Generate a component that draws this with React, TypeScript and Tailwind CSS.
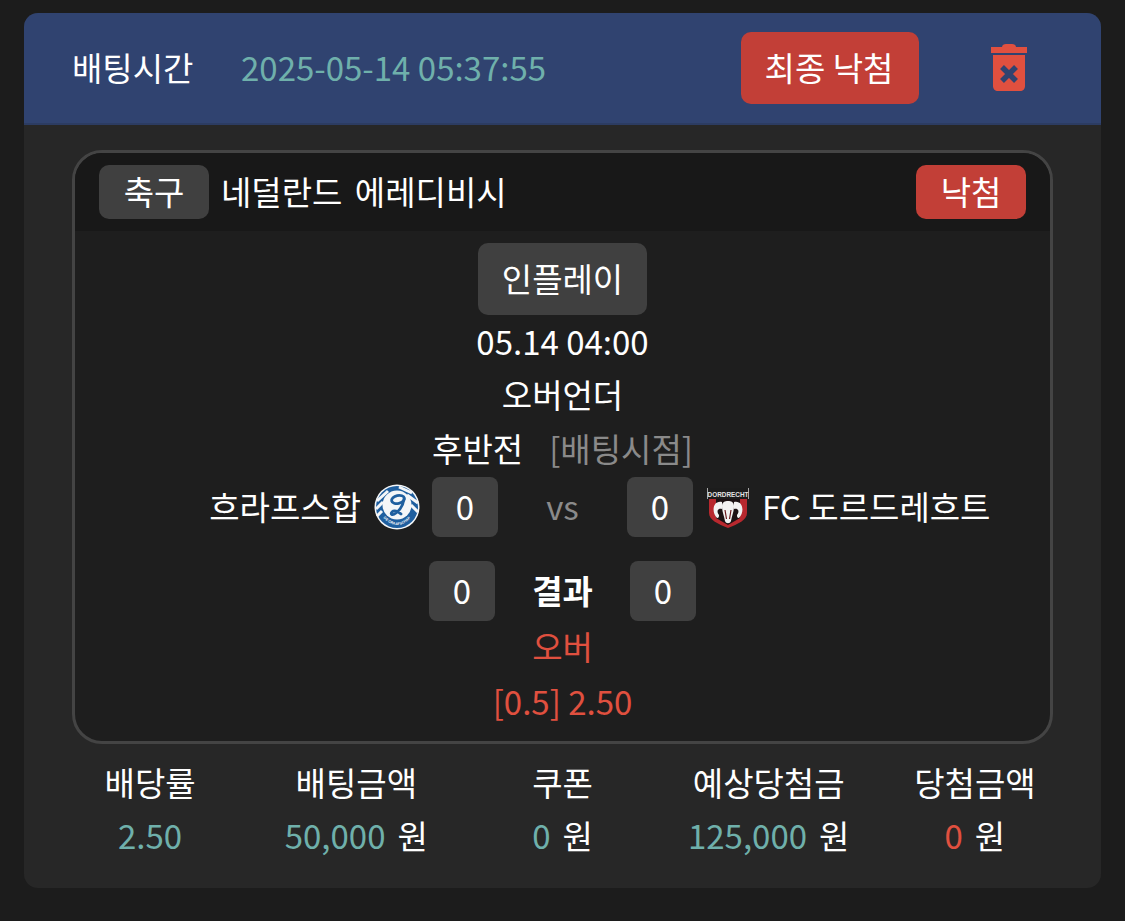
function GraafschapLogo() {
  return (
    <svg width="46" height="46" viewBox="0 0 46 46" className="shrink-0">
      <circle cx="23" cy="23" r="22.5" fill="#f4f6f8" />
      <circle cx="23" cy="23" r="21" fill="#1f5f9f" />
      <path d="M3 17 L14 7 M2 25 L9 18 M3 32 L8 27 M25 3 L38 9 M33 11 L44 19 M37 21 L44 28" stroke="#f4f6f8" strokeWidth="3" fill="none" />
      <circle cx="23" cy="21" r="14.5" fill="#f4f6f8" />
      <ellipse cx="24" cy="15.5" rx="6.5" ry="4" fill="none" stroke="#1f5f9f" strokeWidth="2.8" transform="rotate(-12 24 15.5)" />
      <path d="M30 15 C29 22 26 26 22 29 C18 32 16 30 18 28 C20 26 24 27 27 30" stroke="#1f5f9f" strokeWidth="2.8" fill="none" strokeLinecap="round" />
      <path id="graafArc" d="M6 30 Q23 52 40 30" fill="none" />
      <text fontSize="3.6" fontWeight="700" fill="#f4f6f8" fontFamily="'Liberation Sans',sans-serif">
        <textPath href="#graafArc" startOffset="12%">DE GRAAFSCHAP</textPath>
      </text>
    </svg>
  );
}

function DordrechtLogo() {
  return (
    <svg width="44" height="44" viewBox="0 0 44 44" className="shrink-0">
      <path d="M3 12 H41 V28 C41 35 32 39 22 43 C12 39 3 35 3 28 Z" fill="#b8282e" />
      <path d="M10 12 H34 V33 L22 40 L10 33 Z" fill="#1c1214" />
      <path d="M1.5 3 V14 M42.5 3 V14" stroke="#c9c9c9" strokeWidth="0.8" />
      <rect x="2" y="3" width="40" height="11" fill="#1c1c1c" />
      <text x="22" y="11.5" textAnchor="middle" fontSize="6.4" fontWeight="700" fill="#e4e4e4" fontFamily="'Liberation Sans',sans-serif">DORDRECHT</text>
      <path d="M16 21 C16 17 19 16 22 16 C25 16 28 17 28 21 C28 27 26 30 25 36 C24 39 20 39 19 36 C18 30 16 27 16 21 Z" fill="#f2f2f2" />
      <path d="M16 17 C7 15 5 27 11 33 C13 33 13 31 13 30 C10 26 12 23 16 24 Z M28 17 C37 15 39 27 33 33 C31 33 31 31 31 30 C34 26 32 23 28 24 Z" fill="#f2f2f2" />
      <path d="M19 25 L20.5 34 M25 25 L23.5 34" stroke="#6a1a1e" strokeWidth="1.2" />
    </svg>
  );
}

function TrashIcon() {
  return (
    <svg width="36" height="47" viewBox="0 0 36 47">
      <path d="M11 3 C11 1 13 0 15 0 H21 C23 0 25 1 25 3 H36 V9 H0 V3 Z" fill="#e0503f" />
      <path d="M2 11 H34 V42 C34 45 32 47 29 47 H7 C4 47 2 45 2 42 Z" fill="#e0503f" />
      <path d="M11 23 L25 37 M25 23 L11 37" stroke="#304370" strokeWidth="5.5" />
    </svg>
  );
}

function ScoreBox({ value }: { value: number }) {
  return (
    <div className="flex h-[60px] w-[66px] shrink-0 items-center justify-center rounded-lg bg-[#404040] pb-[2px] text-[33px] text-white">
      {value}
    </div>
  );
}

const summary = [
  { label: '배당률', value: '2.50', unit: '', tone: 'text-[#6fb0ab]' },
  { label: '배팅금액', value: '50,000', unit: '원', tone: 'text-[#6fb0ab]' },
  { label: '쿠폰', value: '0', unit: '원', tone: 'text-[#6fb0ab]' },
  { label: '예상당첨금', value: '125,000', unit: '원', tone: 'text-[#6fb0ab]' },
  { label: '당첨금액', value: '0', unit: '원', tone: 'text-[#e0503f]' },
];

export default function App() {
  return (
    <div className="h-[921px] bg-[#1c1c1c] px-[24px] pt-[13px] font-['Noto_Sans_CJK_KR','Noto_Sans',sans-serif] text-[33px] font-normal leading-[40px] text-white">
      <div className="h-[875px] overflow-hidden rounded-[14px] bg-[#272727]">
        {/* header */}
        <div className="flex h-[112px] items-center border-b-2 border-[#2c3c62] bg-[#304370] pl-[48px]">
          <span className="w-[169px] pb-[3px]">배팅시간</span>
          <span className="w-[500px] pb-[3px] text-[#6fb0ab]">2025-05-14 05:37:55</span>
          <button className="flex h-[72px] w-[178px] items-center justify-center rounded-[10px] bg-[#c23f37] pb-[2px] pr-[2px] text-white">
            최종 낙첨
          </button>
          <div className="ml-[72px] -mt-[2px]">
            <TrashIcon />
          </div>
        </div>

        {/* bet card */}
        <div className="mx-[48px] mt-[25px] h-[594px] overflow-hidden rounded-[30px] border-[3px] border-[#444444] bg-[#1e1e1e]">
          <div className="flex h-[78px] items-center bg-[#181818] pl-[24px] pr-[24px]">
            <div className="flex h-[54px] w-[110px] items-center justify-center rounded-[10px] bg-[#404040] pb-[2px]">축구</div>
            <span className="ml-[12px] flex-1 pb-[3px] [word-spacing:5px]">네덜란드 에레디비시</span>
            <div className="flex h-[54px] w-[110px] items-center justify-center rounded-[10px] bg-[#c23f37] pb-[2px]">낙첨</div>
          </div>

          <div className="flex flex-col items-center pt-[12px]">
            <div className="flex h-[72px] w-[169px] items-center justify-center rounded-[10px] bg-[#404040] pb-[2px]">인플레이</div>
            <div className="mt-[6px] h-[40px]">05.14 04:00</div>
            <div className="mt-[13px] h-[40px]">오버언더</div>
            <div className="mt-[14px] flex h-[40px] gap-[26px]">
              <span>후반전</span>
              <span className="text-[#8a8a8a]">[배팅시점]</span>
            </div>

            <div className="mt-[9px] grid w-full grid-cols-[1fr_129px_1fr] items-center">
              <div className="flex items-center justify-end">
                <span className="pb-[3px]">흐라프스합</span>
                <div className="ml-[13px] mr-[12px]">
                  <GraafschapLogo />
                </div>
                <ScoreBox value={0} />
              </div>
              <div className="pb-[3px] text-center text-[#8a8a8a]">vs</div>
              <div className="flex items-center">
                <ScoreBox value={0} />
                <div className="ml-[13px] mr-[12px]">
                  <DordrechtLogo />
                </div>
                <span className="pb-[3px]">FC 도르드레흐트</span>
              </div>
            </div>

            <div className="mt-[24px] flex items-center">
              <ScoreBox value={0} />
              <div className="w-[135px] pb-[3px] text-center font-bold">결과</div>
              <ScoreBox value={0} />
            </div>

            <div className="mt-[5px] h-[40px] text-[#e0503f]">오버</div>
            <div className="mt-[15px] h-[40px] text-[#e0503f]">[0.5] 2.50</div>
          </div>
        </div>

        {/* summary */}
        <div className="mt-[18px] grid grid-cols-5 px-[23px] text-center">
          {summary.map((item) => (
            <div key={item.label}>
              <div className="h-[40px]">{item.label}</div>
              <div className="mt-[13px] h-[40px]">
                <span className={item.tone}>{item.value}</span>
                {item.unit && <span className="ml-[12px]">{item.unit}</span>}
              </div>
            </div>
          ))}
        </div>
      </div>
    </div>
  );
}
